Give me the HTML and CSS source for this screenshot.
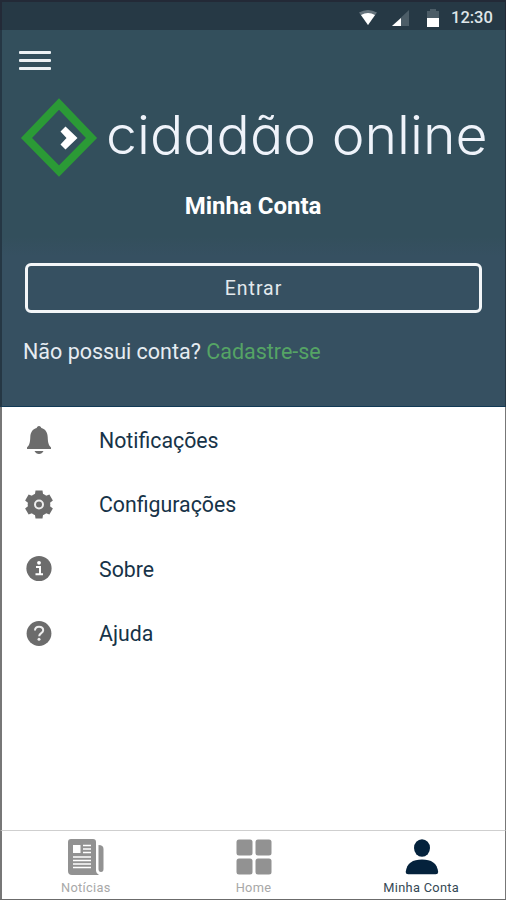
FILE: index.html
```html
<!DOCTYPE html>
<html lang="pt-BR">

<head>
    <meta charset="UTF-8" />
    <meta name="viewport" content="width=device-width, initial-scale=1.0" />
    <title>Minha Conta</title>
    <link rel="stylesheet" href="styles.css">
</head>

<body>
    <div class="app">
        <div class="status-bar">
            <svg class="status-wifi" width="18" height="15" viewBox="0 0 18 15">
                <path d="M0 2.500Q9-2.500 18 2.500L9 15z" fill="#65737c" />
                <path d="M2 5Q9 1 16 5L9 15z" fill="#fff" />
            </svg>
            <svg class="status-signal" width="17" height="16" viewBox="0 0 17 16">
                <path d="M17 0V16H0z" fill="#4c5d67" />
                <path d="M9 8V16H0z" fill="#fff" />
            </svg>
            <svg class="status-battery" width="12" height="18" viewBox="0 0 12 18">
                <path d="M3 0h6v2h3v8H0V2h3z" fill="#4c5d67" />
                <path d="M0 9h12v9H0z" fill="#fff" />
            </svg>
            <span class="clock">12:30</span>
        </div>

        <header class="header">
            <button class="btn-menu" aria-label="Menu">
                <span></span>
                <span></span>
                <span></span>
            </button>
            <div class="logo">
                <svg width="78" height="80" viewBox="0 0 78 80">
                    <path d="M39 6L71.500 40L39 73L6.500 40z" fill="none" stroke="#2b9a36" stroke-width="8" />
                    <path d="M45.500 28.500L57.500 40L45.500 51.500L40.500 46.500L46.500 40L40.500 33.500z" fill="#fff" />
                </svg>
                <span class="logo-text">cidadão online</span>
            </div>
            <h1>Minha Conta</h1>
            <button class="btn-login">Entrar</button>
            <p class="register">Não possui conta? <a>Cadastre-se</a></p>
        </header>

        <ul class="menu">
            <li>
                <svg width="28" height="30" viewBox="0 0 28 30" fill="#6c6c6c">
                    <path d="M14 1c-1.500 0-2 1-2.300 2C7.500 4 5.500 7.500 5.300 12c-.2 6-1 8-3.300 10.500V24h24v-1.500C23.700 20 22.900 18 22.700 12 22.500 7.500 20.500 4 16.300 3 16 2 15.500 1 14 1z" />
                    <path d="M9.500 26h9q-1.500 3-4.500 3t-4.500-3z" />
                </svg>
                <span>Notificações</span>
            </li>
            <li>
                <svg width="28" height="30" viewBox="0 0 28 30">
                    <g fill="#6c6c6c">
                        <circle cx="14" cy="14.500" r="11.300" />
                        <path id="tooth" d="M9.700 6l.8-5.500h7l.8 5.500zM9.700 23l.8 5.500h7l.8-5.500z" />
                        <use href="#tooth" transform="rotate(60 14 14.500)" />
                        <use href="#tooth" transform="rotate(120 14 14.500)" />
                    </g>
                    <circle cx="14" cy="14.500" r="4" fill="none" stroke="#eee" stroke-width="2" />
                </svg>
                <span>Configurações</span>
            </li>
            <li>
                <svg width="28" height="30" viewBox="0 0 28 30">
                    <circle cx="14" cy="14.500" r="12.600" fill="#6c6c6c" />
                    <circle cx="14" cy="8.800" r="1.900" fill="#fff" />
                    <path d="M11 13h4v7M10.500 20.300h7.500" fill="none" stroke="#fff" stroke-width="2" />
                </svg>
                <span>Sobre</span>
            </li>
            <li>
                <svg width="28" height="30" viewBox="0 0 28 30">
                    <circle cx="14" cy="14.500" r="12.400" fill="#6c6c6c" />
                    <path d="M10 11.500c0-2.500 1.700-3.700 4-3.700s4.200 1.300 4.200 3.500c0 3-4 2.700-4 5.900" fill="none" stroke="#eee" stroke-width="2" />
                    <circle cx="14" cy="20.300" r="1.500" fill="#eee" />
                </svg>
                <span>Ajuda</span>
            </li>
        </ul>

        <nav class="tabs">
            <div class="tab">
                <svg width="36" height="36" viewBox="0 0 36 36">
                    <path d="M3 0h22q3 0 3 3v29q0 2 3 4H4q-4 0-4-4V3q0-3 3-3z" fill="#929292" />
                    <path d="M30.500 6q5 0 5 4v20q0 3-2.500 3t-2.500-3z" fill="#929292" />
                    <path d="M5 6h7.500v8H5z" fill="#fff" />
                    <path d="M15 6.500h8M15 10h8M15 13.500h8M5 18h18M5 21.500h18M5 25h18M5 28.500h18" stroke="#fff" stroke-width="1.500" />
                </svg>
                <span>Notícias</span>
            </div>
            <div class="tab">
                <svg width="36" height="36" viewBox="0 0 36 36" fill="#929292">
                    <rect x="0.500" y="0.500" width="16" height="16" rx="2.500" />
                    <rect x="19.500" y="0.500" width="16" height="16" rx="2.500" />
                    <rect x="0.500" y="19.500" width="16" height="16" rx="2.500" />
                    <rect x="19.500" y="19.500" width="16" height="16" rx="2.500" />
                </svg>
                <span>Home</span>
            </div>
            <div class="tab active">
                <svg width="36" height="36" viewBox="0 0 36 36" fill="#04223c">
                    <ellipse cx="19" cy="9" rx="8" ry="8.700" />
                    <path d="M2.700 33C3.700 24 9.700 20.500 19 20.500S34.200 24 35.200 33q0 2.300-2.500 2.300H5.200Q2.700 35.300 2.700 33z" />
                </svg>
                <span>Minha Conta</span>
            </div>
        </nav>
    </div>
</body>

</html>
```

FILE: styles.css
```css
* {
    box-sizing: border-box;
}

body {
    margin: 0;
    font-family: Roboto, "Liberation Sans", sans-serif;
}

.app {
    display: flex;
    flex-direction: column;
    width: 506px;
    height: 900px;
    background-color: white;
    border-bottom: 1px solid #6b6b6b;
}

.status-bar {
    display: flex;
    align-items: center;
    justify-content: flex-end;
    height: 30px;
    padding: 3px 13px 0 0;
    background-color: #263945;
    border: 2px solid #232a37;
    border-width: 2px 1px 0 2px;
}

.status-wifi {
    margin-right: 15px;
}

.status-signal {
    margin-right: 18px;
}

.status-battery {
    margin-right: 12px;
}

.clock {
    width: 41px;
    color: #dfe5e8;
    font-size: 16.5px;
    font-weight: 500;
    white-space: nowrap;
}

.header {
    display: flex;
    flex-direction: column;
    height: 377px;
    padding: 21px 23px 0 22px;
    background: linear-gradient(#334f5c 55%, #365061 60%);
    border: 2px solid #253744;
    border-width: 0 1px 0 2px;
    border-bottom: 1px solid #123a56;
    color: white;
}

.btn-menu {
    display: flex;
    flex-direction: column;
    gap: 5px;
    width: 32px;
    margin-left: -5px;
    padding: 0;
    border: 0;
    background: none;
}

.btn-menu span {
    height: 3px;
    border-radius: 1px;
    background-color: #edf2f5;
}

.logo {
    display: flex;
    align-items: center;
    height: 80px;
    margin: 28px -20px 0 -4px;
}

.logo-text {
    margin: -6px 0 0 8px;
    color: #eff3fa;
    font-family: Inter, "Open Sans", sans-serif;
    font-size: 53px;
    font-weight: 350;
    font-feature-settings: "cv11";
    white-space: nowrap;
    transform: scaleX(1.045);
    transform-origin: left;
}

h1 {
    margin: 13px 0 0;
    font-size: 24px;
    font-weight: 700;
    line-height: 30px;
    text-align: center;
}

.btn-login {
    height: 50px;
    margin: 42px 0 0 1px;
    border: 3px solid #f3f6f8;
    border-radius: 6px;
    background: none;
    color: #e3e9ed;
    font-family: inherit;
    font-size: 19.5px;
    letter-spacing: 1px;
}

.register {
    margin: 24px 0 0 -1px;
    color: #e6ecf2;
    font-size: 21.5px;
    line-height: 30px;
}

.register a {
    color: #55a465;
}

.menu {
    flex: 1;
    margin: 0;
    padding: 1px 0 0 23px;
    border: 2px solid #777;
    border-width: 0 1px 0 2px;
    list-style: none;
}

.menu li {
    display: flex;
    align-items: center;
    gap: 46px;
    height: 64.5px;
    color: #173348;
    font-size: 21.3px;
}

.tabs {
    display: flex;
    height: 69px;
    border: 2px solid #777;
    border-width: 1px 1px 0 2px;
    border-top-color: #cfcfcf;
}

.tab {
    display: flex;
    flex: 1;
    flex-direction: column;
    align-items: center;
    gap: 5px;
    padding-top: 8px;
    color: #a8a8a8;
    font-size: 12.8px;
    letter-spacing: 0.3px;
}

.active {
    color: #354955;
}
```
